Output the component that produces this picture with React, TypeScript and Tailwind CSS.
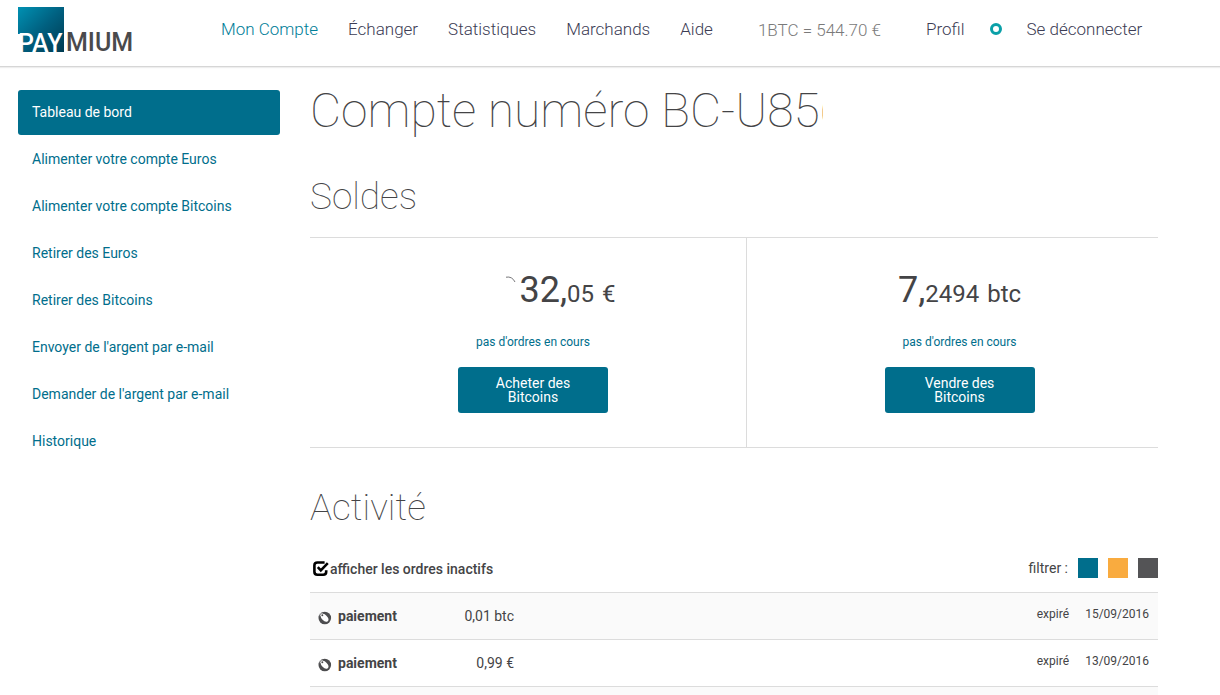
import React from "react";

const navLinks = ["Échanger", "Statistiques", "Marchands", "Aide"];

const sideLinks = [
  "Alimenter votre compte Euros",
  "Alimenter votre compte Bitcoins",
  "Retirer des Euros",
  "Retirer des Bitcoins",
  "Envoyer de l'argent par e-mail",
  "Demander de l'argent par e-mail",
  "Historique",
];

const activity = [
  { amount: "0,01 btc", date: "15/09/2016" },
  { amount: "0,99 €", date: "13/09/2016" },
];

function Logo() {
  return (
    <svg width="118" height="52" viewBox="0 0 118 52" className="overflow-visible" role="img" aria-label="Paymium">
      <defs>
        <linearGradient id="logo-square" x1="0" y1="0" x2="1" y2="1">
          <stop offset="0" stopColor="#0091b3" />
          <stop offset="0.5" stopColor="#006080" />
          <stop offset="1" stopColor="#003a50" />
        </linearGradient>
      </defs>
      <path d="M0 0H46V45H3V27H0Z" fill="url(#logo-square)" />
      <text y="45" fontFamily="Roboto, sans-serif" fontSize="25">
        <tspan x="0" fontWeight="500" fill="#fff">PAY</tspan>
        <tspan x="48" y="44" fontWeight="500" fill="#4a4a4c">MIUM</tspan>
      </text>
    </svg>
  );
}

function CheckIcon() {
  return (
    <svg width="16" height="16" viewBox="0 0 16 16" fill="none" stroke="#000" className="pointer-events-none absolute inset-0" aria-hidden="true">
      <path d="M11.6 1.5H4.4Q1.4 1.5 1.4 4.5V10.8Q1.4 13.8 4.4 13.8H10.2Q13.2 13.8 13.2 10.8V9.2" strokeWidth="2.6" />
      <path d="M4.8 6.2L7.8 9.3L14.8 2.2" strokeWidth="2.6" />
    </svg>
  );
}

function StatusIcon() {
  return (
    <svg width="14" height="14" viewBox="0 0 14 14" aria-hidden="true">
      <circle cx="6.8" cy="7" r="6.3" fill="#4d4d4f" />
      <ellipse cx="6.6" cy="6.8" rx="2.8" ry="4.6" transform="rotate(-43 6.6 6.8)" fill="#fff" />
      <circle cx="3.2" cy="3.4" r="1.7" fill="#fff" />
      <path d="M1.4 5.4Q1.8 2.4 4.6 1.4" stroke="#6d6d6f" strokeWidth="1" fill="none" />
      <circle cx="4.3" cy="4.3" r="1" fill="#4d4d4f" />
    </svg>
  );
}

function Balance({ whole, cents, unit, action, masked, className }: {
  whole: string;
  cents: string;
  unit: string;
  action: string;
  masked?: boolean;
  className: string;
}) {
  return (
    <div className={"flex h-[209px] flex-col items-center pt-7 " + className}>
      <p className="flex items-baseline leading-12">
        {masked && (
          <svg width="69" height="26" viewBox="0 0 69 26" fill="none" stroke="#77777a" aria-hidden="true">
            <path d="M56 1.2Q62 0 65 6" strokeWidth="1" />
          </svg>
        )}
        <span className="text-4xl leading-12">{whole}</span>
        <span className="text-2xl">{cents}</span>
        <span className="ml-2 text-2xl">{unit}</span>
      </p>
      <a href="#ordres" className="mt-5 text-xs leading-4 text-[#006e8c]">pas d'ordres en cours</a>
      <button type="button" className="mt-[17px] h-[46px] w-[150px] rounded-[3px] bg-[#006e8c] text-sm leading-[14px] text-white">
        {action}
        <br />
        Bitcoins
      </button>
    </div>
  );
}

export default function App() {
  return (
    <div className="h-screen overflow-hidden bg-white font-['Roboto',sans-serif] text-sm text-[#444446]">
      <header className="flex h-[67px] items-start border-b border-[#d6d6d6] pl-[18px] shadow-[0_1px_1px_#eeeeee]">
        <a href="#accueil" className="mt-[7px] w-[203px]">
          <Logo />
        </a>
        <nav className="flex pt-4 text-[17px] leading-[26px] font-light whitespace-nowrap text-[#3c3c54]">
          <a href="#compte" className="mr-[30px] text-[#007e98]">Mon Compte</a>
          {navLinks.map((label) => (
            <a key={label} href="#menu" className="mr-[30px]">{label}</a>
          ))}
          <span className="ml-[15px] pt-px text-[#7a7a7a]">1BTC = 544.70 €</span>
          <a href="#profil" className="ml-[45px]">Profil</a>
          <span className="mx-[25px] mt-[7px] size-3 rounded-full border-[3px] border-[#0aa0a8]" />
          <a href="#deconnexion">Se déconnecter</a>
        </nav>
      </header>

      <div className="flex pr-[62px] pl-[18px]">
        <aside className="w-[262px] shrink-0 pt-[23px]">
          <ul className="flex flex-col gap-0.5 leading-[45px] text-[#006e8c]">
            <li>
              <a href="#tableau" className="block rounded-[3px] bg-[#006e8c] px-3.5 text-white">Tableau de bord</a>
            </li>
            {sideLinks.map((label) => (
              <li key={label}>
                <a href="#section" className="block px-3.5">{label}</a>
              </li>
            ))}
          </ul>
        </aside>

        <main className="ml-[30px] grow">
          <h1 className="mt-3 w-[513px] overflow-hidden text-5xl leading-[64px] font-thin whitespace-nowrap">
            Compte numéro BC-U856
          </h1>
          <h2 className="mt-7 text-[37px] leading-[52px] font-thin">Soldes</h2>

          <section className="mt-3.5 flex border-y border-[#dcdcdc]">
            <Balance masked whole="32," cents="05" unit="€" action="Acheter des" className="w-[437px] border-r border-[#dcdcdc] pl-2.5" />
            <Balance whole="7," cents="2494" unit="btc" action="Vendre des" className="grow pl-3.5" />
          </section>

          <h2 className="mt-[34px] text-[37px] leading-[52px] font-thin">Activité</h2>

          <div className="mt-[23px] flex items-center justify-between">
            <label className="flex items-center pl-[3px] leading-6 font-medium">
              <span className="relative mr-px size-4">
                <input type="checkbox" defaultChecked className="absolute inset-0 m-0 size-4 appearance-none" />
                <CheckIcon />
              </span>
              afficher les ordres inactifs
            </label>
            <div className="flex items-center gap-2.5 pb-0.5">
              <span>filtrer :</span>
              <button type="button" aria-label="Bleu" className="size-5 bg-[#006e8c]" />
              <button type="button" aria-label="Orange" className="size-5 bg-[#f9ab3f]" />
              <button type="button" aria-label="Gris" className="size-5 bg-[#545456]" />
            </div>
          </div>

          <table className="mt-[11px] w-full border-collapse">
            <tbody>
              {activity.map((row) => (
                <tr key={row.date} className="h-[47px] border-t border-[#dcdcdc] odd:bg-[#fafafa]">
                  <td className="w-7 pt-1 pl-2">
                    <StatusIcon />
                  </td>
                  <td className="w-[72px] font-bold">paiement</td>
                  <td className="w-[104px] text-right">{row.amount}</td>
                  <td className="pr-3.5 pb-1 text-right text-xs">expiré</td>
                  <td className="w-[75px] pr-[9px] pb-1 text-right text-xs">{row.date}</td>
                </tr>
              ))}
              <tr className="h-[47px] border-t border-[#dcdcdc] bg-[#fafafa]">
                <td colSpan={5} />
              </tr>
            </tbody>
          </table>
        </main>
      </div>
    </div>
  );
}
